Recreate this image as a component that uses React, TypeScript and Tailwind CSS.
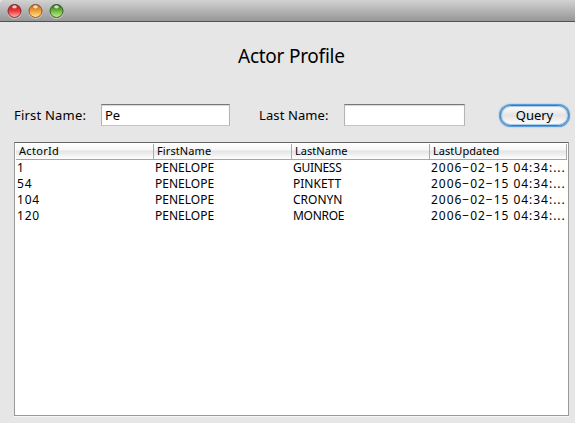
import React from "react";

const lights = [
  { id: "red", rim: "#7d2a2c", top: "#b8161d", mid: "#f0373a", glow: "#ffb9b5" },
  { id: "amber", rim: "#8f5030", top: "#b8601e", mid: "#f2a13b", glow: "#ffea84" },
  { id: "green", rim: "#34582a", top: "#2a651a", mid: "#6dba3d", glow: "#c4f28c" },
];

function Light({ id, rim, top, mid, glow }: (typeof lights)[number]) {
  return (
    <svg width="15" height="16" viewBox="0 0 15 16" className="block">
      <defs>
        <linearGradient id={id} x1="0" y1="0" x2="0" y2="1">
          <stop offset="0" stopColor={top} />
          <stop offset=".5" stopColor={mid} />
          <stop offset="1" stopColor={glow} />
        </linearGradient>
      </defs>
      <circle cx="7.5" cy="9" r="7" fill="#e2e2e2" opacity=".65" />
      <circle cx="7.5" cy="8" r="6.5" fill={`url(#${id})`} stroke={rim} strokeWidth="1" />
      <ellipse cx="7.5" cy="3.8" rx="2.3" ry="1.6" fill="#fff" opacity=".75" />
    </svg>
  );
}

const columns = [
  { name: "ActorId", spacing: "tracking-[0.3px]" },
  { name: "FirstName", spacing: "tracking-[0.1px]" },
  { name: "LastName", spacing: "tracking-[0.05px]" },
  { name: "LastUpdated", spacing: "tracking-[0.05px]" },
];

const rows = [
  ["1", "GUINESS", "tracking-[-0.3px]"],
  ["54", "PINKETT", "tracking-normal"],
  ["104", "CRONYN", "tracking-normal"],
  ["120", "MONROE", "tracking-[-0.3px]"],
];

const field =
  "block h-[22px] border border-t-[#777] border-x-[#b4b4b4] border-b-[#c4c4c4] bg-white pl-[3px] text-[13px] leading-[20px] shadow-[inset_0_1px_1px_#d8d8d8] outline-none";

export default function App() {
  return (
    <div className="flex h-[423px] w-[575px] flex-col overflow-hidden bg-[#e6e6e6] font-['Noto_Sans','Open_Sans',sans-serif] text-black">
      <div className="flex h-[22px] shrink-0 items-start gap-[6px] rounded-tl-[4px] border-b border-[#515151] bg-linear-to-b from-[#d2d2d2] via-[#b4b4b4] to-[#979797] pt-[3px] pl-[7px]">
        {lights.map((l) => (
          <Light key={l.id} {...l} />
        ))}
      </div>

      <h1 className="mt-[21px] ml-[238px] h-[26px] text-[19px] leading-[26px] font-normal tracking-[-0.25px] whitespace-nowrap">
        Actor Profile
      </h1>

      <div className="mt-[35px] flex h-[22px] items-center pl-[14px] text-[13px]">
        <label className="w-[87px] pt-[2px] tracking-[0.2px] whitespace-nowrap">First Name:</label>
        <input className={`${field} w-[129px]`} defaultValue="Pe" />
        <label className="ml-[29px] w-[85px] pt-[2px] tracking-[0.1px] whitespace-nowrap">Last Name:</label>
        <input className={`${field} w-[121px]`} />
        <button className="ml-[35px] h-[21px] w-[69px] rounded-full border border-[#3c78b8] bg-linear-to-b from-white via-[#e3e3e3] to-white text-[13px] leading-[19px] shadow-[0_0_0_1px_#5a9edb,0_0_2px_1px_#8abbe8,inset_0_0_1px_1px_#a9c9e6]">
          Query
        </button>
      </div>

      <div className="mt-[16px] ml-[14px] h-[274px] w-[555px] border border-[#999] border-t-[#666] bg-white shadow-[0_1px_0_#f7f7f7]">
        <div className="mx-px flex h-[17px] border-b border-[#a5a5a5] bg-[linear-gradient(#fff_0%,#f6f6f6_44%,#e4e4e4_50%,#f4f4f4_80%,#fff_100%)] text-[11px] leading-[16px]">
          {columns.map((c) => (
            <div key={c.name} className="w-[138px] py-px last:w-[137px]">
              <div className={`h-[15px] border-r border-[#aaa] pl-[3px] leading-[14px] ${c.spacing}`}>{c.name}</div>
            </div>
          ))}
        </div>
        {rows.map(([id, last, spacing]) => (
          <div key={id} className="flex h-4 pl-[2px] text-[12px] leading-[16px] whitespace-nowrap">
            <div className="w-[138px] tracking-[0.8px]">{id}</div>
            <div className="w-[138px]">PENELOPE</div>
            <div className={`w-[138px] ${spacing}`}>{last}</div>
            <div className="tracking-[0.97px]">2006−02−15 04:34:...</div>
          </div>
        ))}
      </div>
    </div>
  );
}
